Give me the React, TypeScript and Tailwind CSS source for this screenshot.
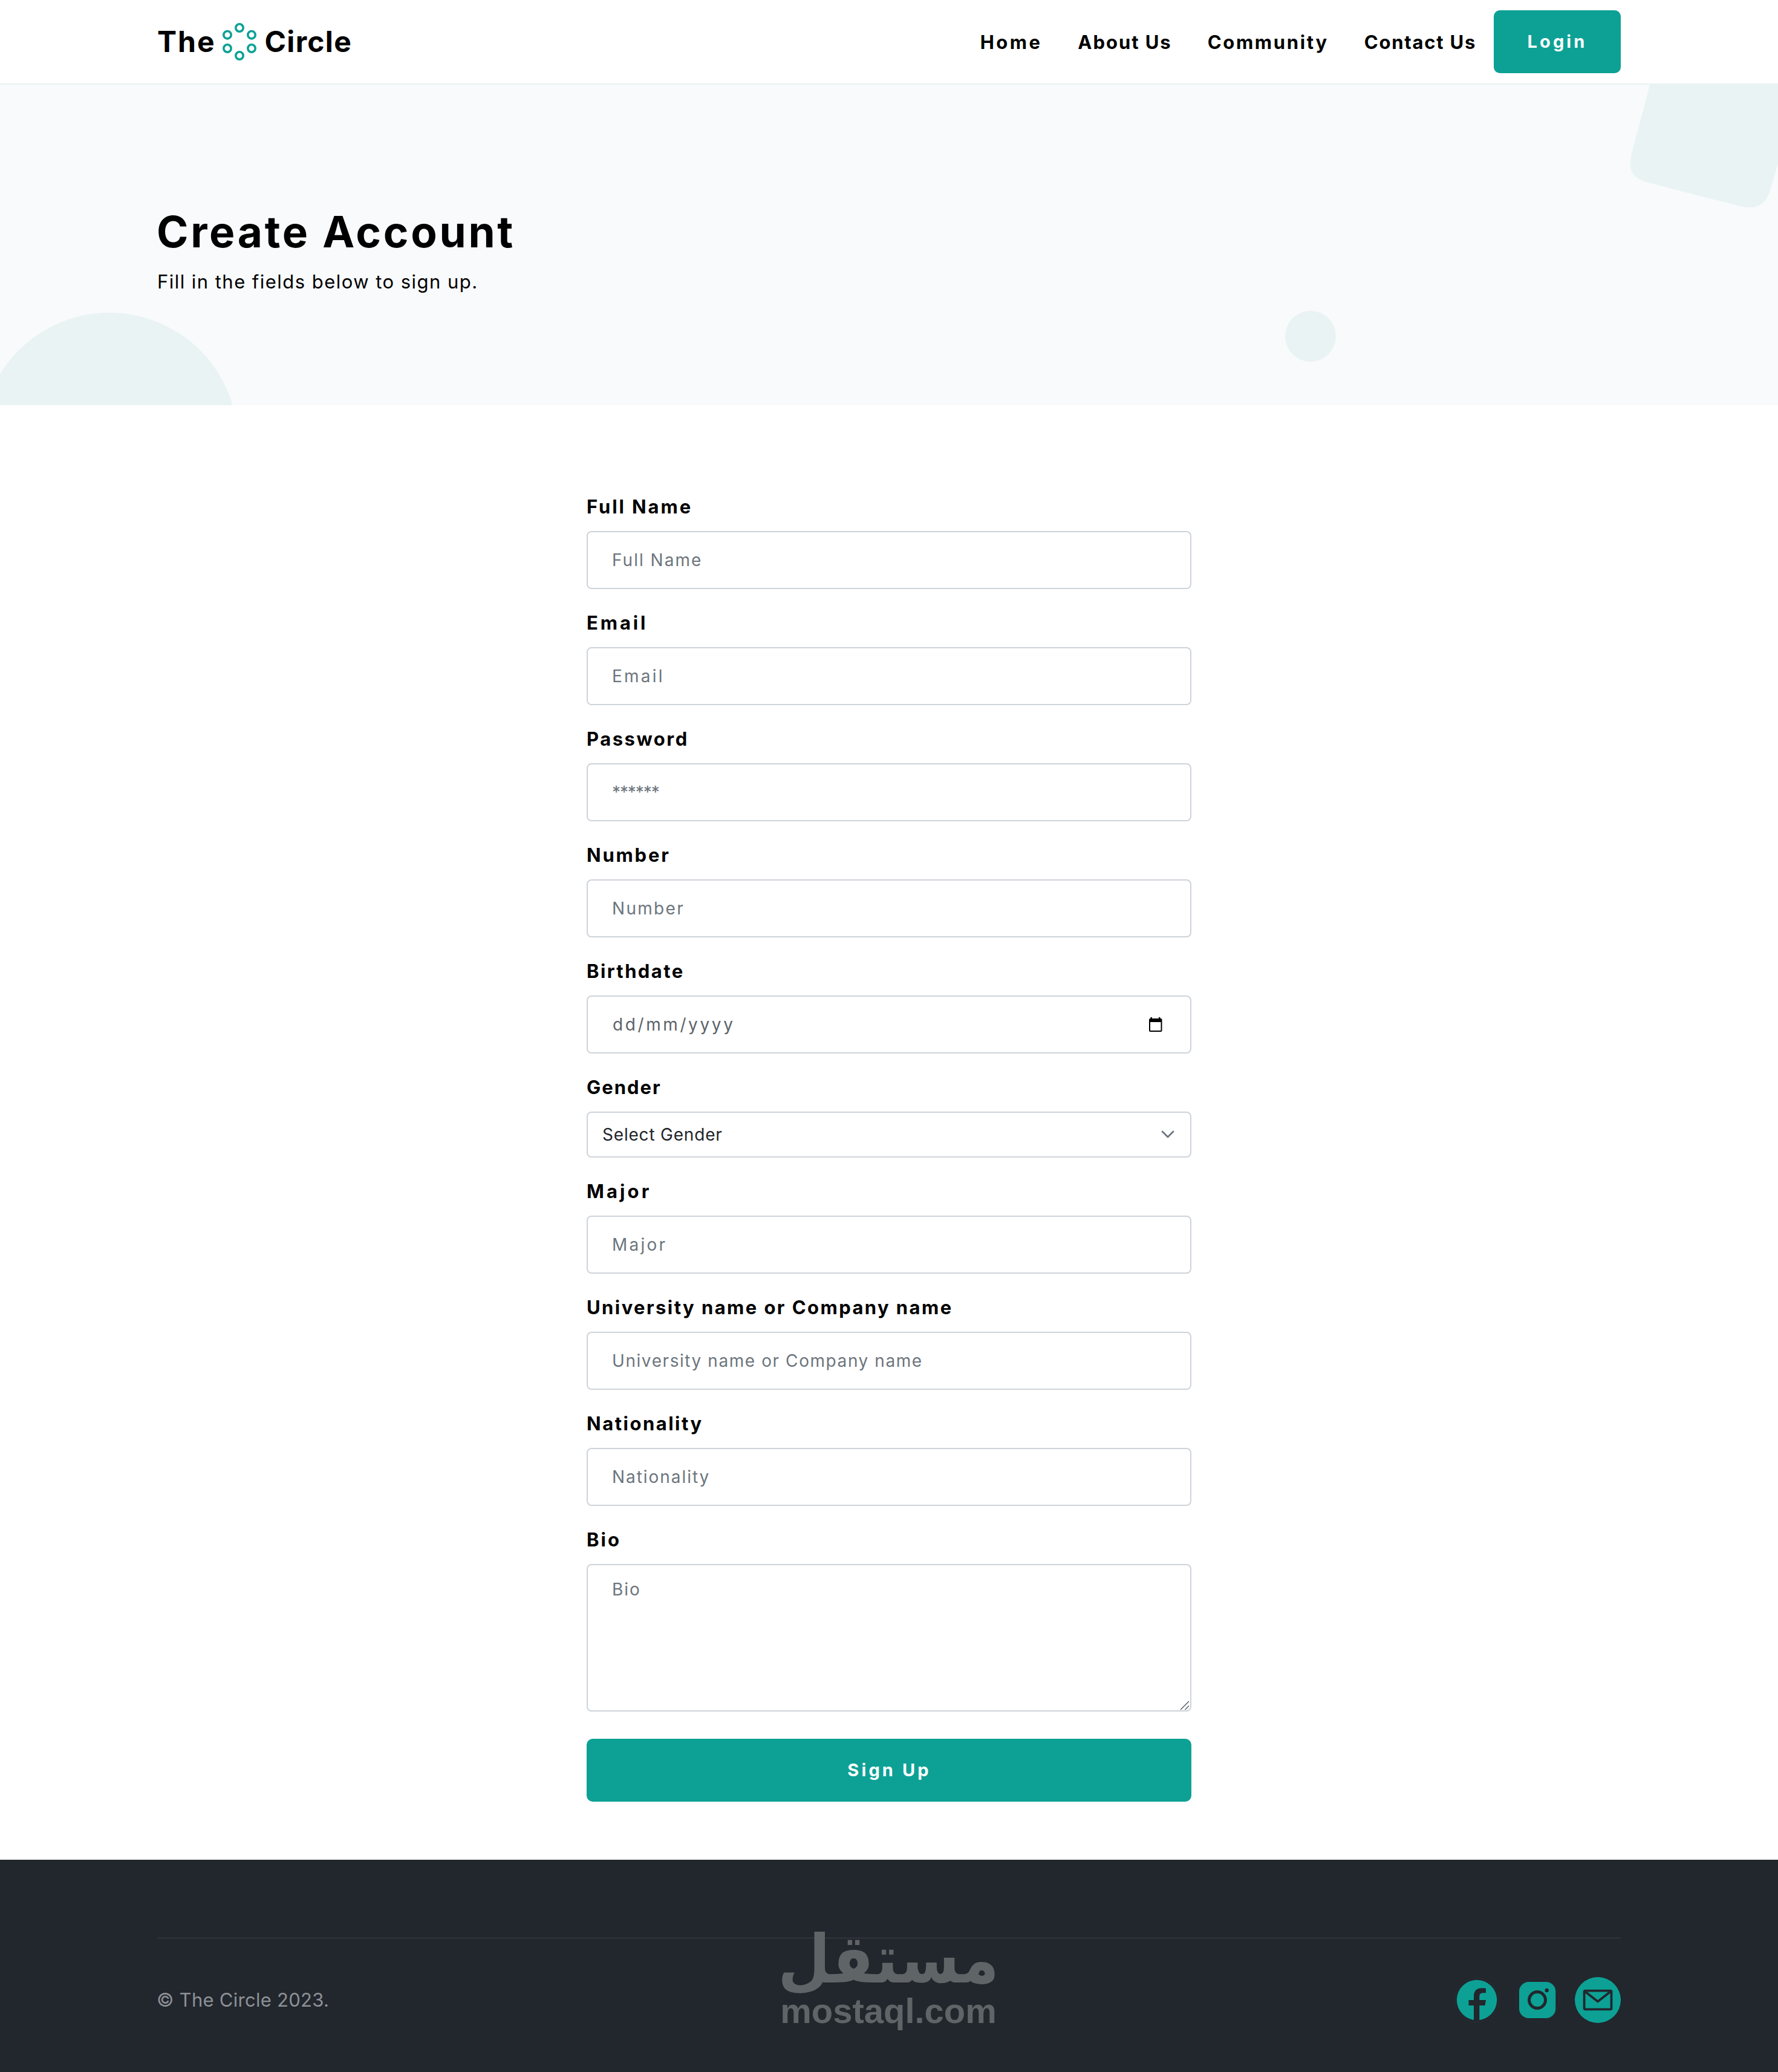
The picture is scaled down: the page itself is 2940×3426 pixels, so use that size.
import React, { useState } from 'react';

interface FieldProps {
    label: string;
    labelSpacing: string;
    children: React.ReactNode;
}

interface TextFieldProps {
    name: string;
    label: string;
    labelSpacing: string;
    placeholder?: string;
    spacing: string;
    type?: string;
}

const navLinks = [
    { text: 'Home', spacing: 'tracking-[3.4px]' },
    { text: 'About Us', spacing: 'tracking-[1.95px]' },
    { text: 'Community', spacing: 'tracking-[2.65px]' },
    { text: 'Contact Us', spacing: 'tracking-[1.75px]' },
];

const boxClass = 'w-full rounded-lg border-2 border-[#ced4da] bg-white';

const LogoMark = () => (
    <svg width="60" height="66" viewBox="0 0 60 66" fill="none" stroke="#0da195" strokeWidth="3.6" className="ml-[9px] shrink-0">
        <circle cx="30" cy="10" r="6.2" />
        <circle cx="50" cy="21.7" r="6.2" />
        <circle cx="50" cy="44" r="6.2" />
        <circle cx="30" cy="56" r="6.2" />
        <circle cx="10" cy="44" r="6.2" />
        <circle cx="10" cy="21.7" r="6.2" />
    </svg>
);

const Header = () => (
    <header className="h-[140px] border-b-2 border-[#e8f3f3] bg-white">
        <div className="mx-auto flex h-full w-[2420px] items-center justify-between">
            <a href="#" className="flex items-center text-[48px] font-bold leading-none text-black">
                <span className="tracking-[2px]">The</span>
                <LogoMark />
                <span className="ml-3 tracking-[1.3px]">Circle</span>
            </a>
            <nav className="flex items-center">
                <div className="flex gap-[59px] pt-0.5 text-[31px] font-bold text-black">
                    {navLinks.map(link => (
                        <a key={link.text} href="#" className={link.spacing}>{link.text}</a>
                    ))}
                </div>
                <button className="ml-[29px] h-[104px] w-[210px] rounded-[10px] bg-[#0da195] text-[29px] font-bold tracking-[4.1px] text-white">
                    Login
                </button>
            </nav>
        </div>
    </header>
);

const Hero = () => (
    <section className="relative h-[530px] overflow-hidden bg-[#f8fafc]">
        <svg width="2940" height="530" viewBox="0 0 2940 530" fill="#eaf3f4" className="absolute inset-0">
            <circle cx="181" cy="589" r="212" />
            <circle cx="2167" cy="416" r="42" />
            <path d="M2728 0L2698 114C2691 142 2700 154 2722 161L2878 201C2902 207 2918 200 2926 178L2940 130V0Z" />
        </svg>
        <div className="relative mx-auto w-[2420px] pt-[200px] text-black">
            <h1 className="-ml-px text-[71px] font-bold leading-[86px] tracking-[3.7px]">Create Account</h1>
            <p className="mt-4 text-[31px] leading-[48px] tracking-[1.46px]">Fill in the fields below to sign up.</p>
        </div>
    </section>
);

const Field: React.FC<FieldProps> = ({ label, labelSpacing, children }) => (
    <label className="block">
        <span className={`mb-4 block h-12 text-[31px] font-bold leading-[48px] text-black ${labelSpacing}`}>{label}</span>
        {children}
    </label>
);

const TextField: React.FC<TextFieldProps> = ({ name, label, labelSpacing, placeholder, spacing, type = 'text' }) => (
    <Field label={label} labelSpacing={labelSpacing}>
        <input
            type={type}
            name={name}
            placeholder={placeholder || label}
            className={`${boxClass} block h-24 px-10 text-[28px] placeholder:text-[#6c757d] ${spacing}`}
        />
    </Field>
);

const SignUpForm = () => {
    const [gender, setGender] = useState('');

    return (
        <form className="mx-auto flex w-[1000px] flex-col gap-8 pt-36 pb-24" onSubmit={e => e.preventDefault()}>
            <TextField name="name" label="Full Name" labelSpacing="tracking-[2.9px]" spacing="tracking-[2px]" />
            <TextField name="email" label="Email" labelSpacing="tracking-[3.9px]" spacing="tracking-[3.2px]" />
            <TextField
                name="password"
                type="password"
                label="Password"
                placeholder="******"
                labelSpacing="tracking-[2.5px]"
                spacing="tracking-[-1.1px]"
            />
            <TextField name="number" label="Number" labelSpacing="tracking-[2.8px]" spacing="tracking-[2.3px]" />

            <Field label="Birthdate" labelSpacing="tracking-[2.4px]">
                <div className={`${boxClass} flex h-24 items-center pl-[41px] pr-[46px]`}>
                    <input
                        name="birthdate"
                        placeholder="dd/mm/yyyy"
                        className="min-w-0 flex-1 text-[28px] tracking-[3.6px] placeholder:text-[#5c6369]"
                    />
                    <svg width="23" height="24" viewBox="0 0 23 24" fill="none">
                        <path
                            d="M3.5 0H6V2H17V0H19.5V2H20.5A2 2 0 0 1 22.5 4V22A2 2 0 0 1 20.5 24H3A2 2 0 0 1 1 22V4A2 2 0 0 1 3 2H3.5ZM3 8V22H20.5V8Z"
                            fill="#000"
                            fillRule="evenodd"
                        />
                    </svg>
                </div>
            </Field>

            <Field label="Gender" labelSpacing="tracking-[2px]">
                <div className="relative">
                    <select
                        name="gender"
                        value={gender}
                        onChange={e => setGender(e.target.value)}
                        className={`${boxClass} block h-[76px] appearance-none pl-6 text-[28px] tracking-[0.8px] text-[#212529]`}
                    >
                        <option value="">Select Gender</option>
                        <option value="female">Female</option>
                        <option value="male">Male</option>
                    </select>
                    <svg width="24" height="16" viewBox="0 0 24 16" fill="none" className="absolute right-[27px] top-[30px]">
                        <path d="M3 3L12 12L21 3" stroke="#6c757d" strokeWidth="2.8" strokeLinecap="round" strokeLinejoin="round" />
                    </svg>
                </div>
            </Field>

            <TextField name="major" label="Major" labelSpacing="tracking-[4.1px]" spacing="tracking-[3.2px]" />
            <TextField
                name="company"
                label="University name or Company name"
                labelSpacing="tracking-[2.42px]"
                spacing="tracking-[1.57px]"
            />
            <TextField name="nationality" label="Nationality" labelSpacing="tracking-[2.5px]" spacing="tracking-[1.95px]" />

            <Field label="Bio" labelSpacing="tracking-[3px]">
                <div className="relative">
                    <textarea
                        name="bio"
                        placeholder="Bio"
                        className={`${boxClass} block h-[244px] resize-none px-10 pt-[19px] text-[28px] leading-[42px] tracking-[1.95px] placeholder:text-[#6c757d]`}
                    />
                    <svg width="16" height="16" viewBox="0 0 16 16" className="absolute bottom-[2px] right-[3px]">
                        <path d="M1 15L15 1M8.5 15L15 8.5" stroke="#5c6166" strokeWidth="1.5" />
                    </svg>
                </div>
            </Field>

            <button
                type="submit"
                className="mt-[13px] h-[104px] w-full rounded-[10px] bg-[#0da195] pl-px text-[29px] font-bold tracking-[4.1px] text-white"
            >
                Sign Up
            </button>
        </form>
    );
};

const SocialIcons = () => (
    <div className="flex gap-6">
        <svg width="76" height="76" viewBox="0 0 76 76">
            <circle cx="38" cy="38" r="36.5" fill="none" stroke="#2b2f34" />
            <circle cx="38" cy="38" r="33.2" fill="#0da195" />
            <path
                d="M33 72V47H24.5V38H33V31.5C33 22.5 38 18.2 46.5 18.2C50 18.2 53 18.7 53 18.7V26.3H48.5C44 26.3 42.3 28.5 42.3 32.5V38H53L51.5 47H42.3V72Z"
                fill="#22262d"
            />
        </svg>
        <svg width="76" height="76" viewBox="0 0 76 76">
            <circle cx="38" cy="38" r="36.5" fill="none" stroke="#2b2f34" />
            <rect x="8" y="8" width="60.3" height="60" rx="16" fill="#0da195" />
            <circle cx="38" cy="38" r="13.5" fill="none" stroke="#22262d" strokeWidth="5" />
            <circle cx="53.7" cy="22" r="3.2" fill="#22262d" />
        </svg>
        <svg width="76" height="76" viewBox="0 0 76 76">
            <circle cx="38" cy="38" r="38" fill="#0da195" />
            <g fill="none" stroke="#22262d" strokeWidth="3.8" strokeLinejoin="round">
                <rect x="15.6" y="22.7" width="44.9" height="30.6" rx="1.5" />
                <path d="M17 24L38 40.5L59 24" />
            </g>
        </svg>
    </div>
);

const Footer = () => (
    <footer className="relative h-[351px] bg-[#22262d] pt-[129px]">
        <div className="mx-auto w-[2420px] border-t border-[#3e4347]">
            <div className="flex items-center justify-between pt-16">
                <p className="-ml-px text-[31px] tracking-[0.27px] text-[#8c9196]">© The Circle 2023.</p>
                <SocialIcons />
            </div>
        </div>

        {/* watermark */}
        <div className="absolute left-[1289px] top-[105px] w-[360px] text-[#5f6467]">
            <div
                dir="rtl"
                className="flex h-[120px] origin-center scale-y-[1.11] justify-center whitespace-nowrap font-['DejaVu_Sans'] text-[100px] font-bold leading-[120px]"
            >
                مستقل
            </div>
            <div className="-mt-1 whitespace-nowrap text-center font-['Liberation_Sans'] text-[58px] font-bold leading-[58px]">
                mostaql.com
            </div>
        </div>
    </footer>
);

export default function App() {
    return (
        <div className="w-[2940px] bg-white font-[Inter,sans-serif]">
            <Header />
            <Hero />
            <SignUpForm />
            <Footer />
        </div>
    );
}
